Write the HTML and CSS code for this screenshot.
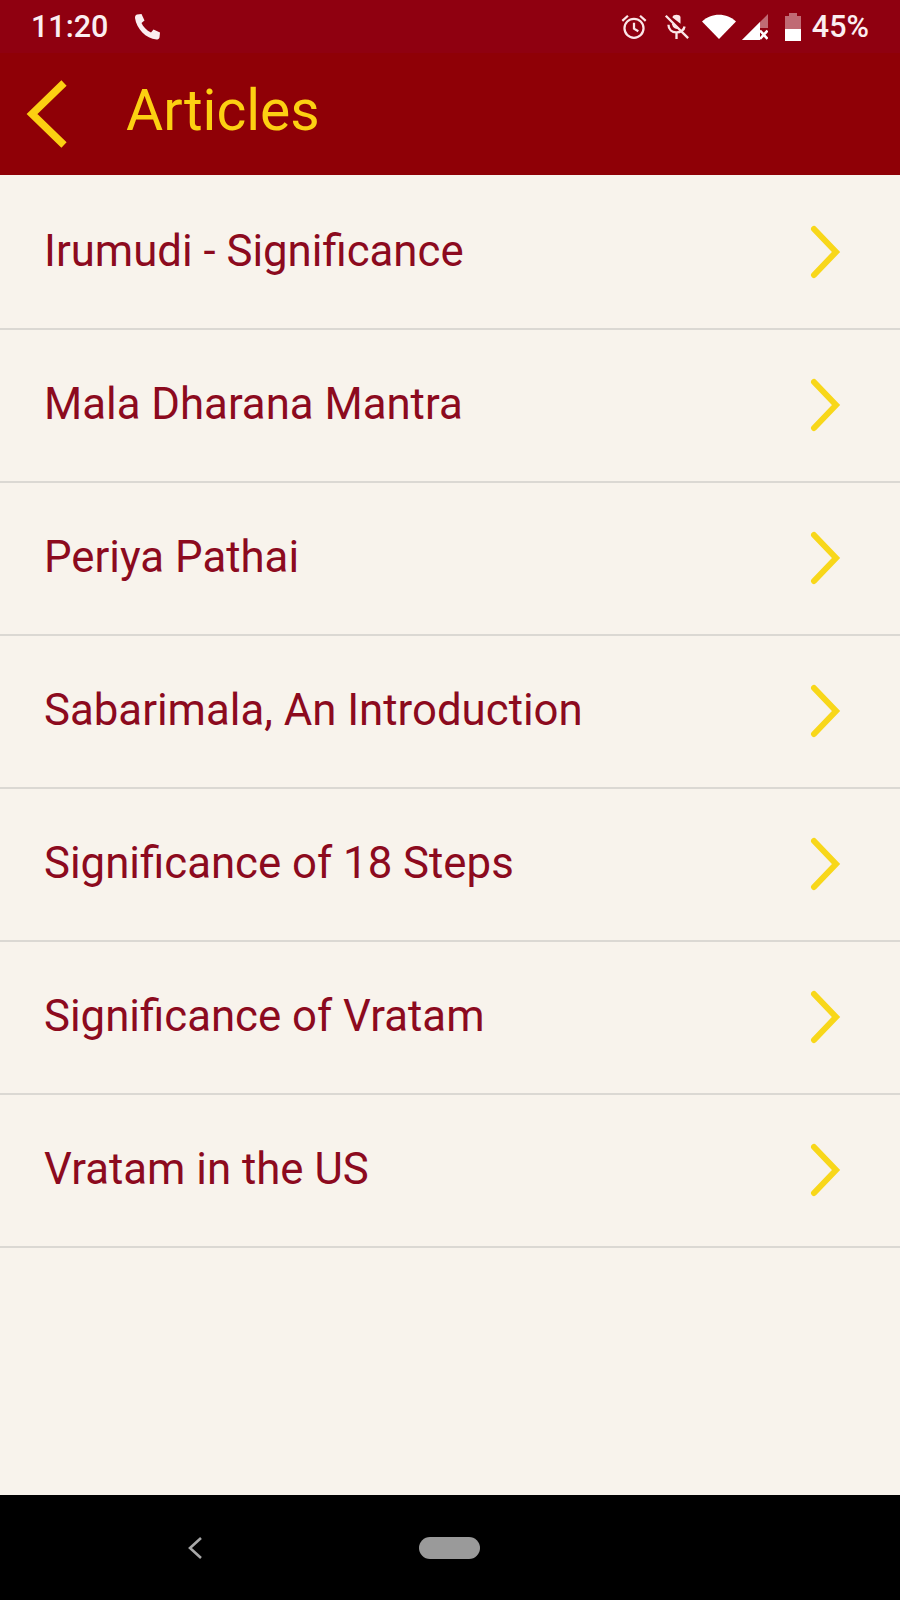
FILE: index.html
```html
<!DOCTYPE html>
<html>
<head>
<meta http-equiv="Content-Type" content="text/html; charset=utf-8"/>
<title>Articles</title>
<link rel="stylesheet" href="styles.css">
</head>
<body>
<div class="phone">
  <div class="status">
    <div class="status-left">
      <span class="time">11:20</span>
      <svg class="call" width="28" height="28" viewBox="0 0 28 28"><path d="M4 1.5 L8.5 1 L11.5 7.5 L8.5 10 C10 13.5 13.5 17.5 18 19.5 L20.5 16.5 L27 19.5 L26.5 24.5 C26 26 25 26.5 23.5 26.5 C13 25.5 3.5 16 2 5 C2 3 2.5 2 4 1.5 Z" fill="#fbeef0"/></svg>
    </div>
    <div class="status-right">
      <svg class="alarm" width="26" height="26" viewBox="0 0 30 30" fill="none" stroke="#fbe6e8" stroke-width="2.6"><circle cx="15" cy="16.5" r="11"/><path d="M15 10 V17 L20 20"/><path d="M1.5 8 L8 2 M28.5 8 L22 2"/></svg>
      <svg class="mic" width="25" height="27" viewBox="0 0 28 30" fill="none" stroke="#fbe6e8" stroke-width="2.6"><path d="M9.5 4.5 C10 1 18 1 18.5 4.5 V12 L9.5 5 Z" fill="#fbe6e8" stroke="none"/><path d="M5 13 C5 24 22 24 23 15 M14 22 V29"/><path d="M10 12 C11 16 14 17 16 16.5"/><path d="M2 3 L27 28"/></svg>
      <svg class="wifi" width="34" height="25" viewBox="0 0 34 25"><path d="M0 7.5 C9 -1.5 25 -1.5 34 7.5 L17 25 Z" fill="#ffffff"/></svg>
      <svg class="signal" width="26" height="26" viewBox="0 0 26 26"><path d="M0 26 L26 0 V14 H18 V26 Z" fill="#c06a74"/><path d="M0 26 L18 8 V26 Z" fill="#ffffff"/><path d="M18 16.5 L25.5 25 M25.5 16.5 L18 25" stroke="#ffffff" stroke-width="2.6"/></svg>
      <div class="battery"><div class="battery-cap"></div><div class="battery-body"><div class="battery-fill"></div></div></div>
      <span class="percent">45%</span>
    </div>
  </div>
  <div class="toolbar">
    <svg class="back" width="44" height="72" viewBox="0 0 44 72" fill="none" stroke="#fcd012" stroke-width="7.5"><path d="M38 5 L6 36 L38 67"/></svg>
    <span class="title">Articles</span>
  </div>
  <ul class="list">
    <li class="row"><span class="row-text">Irumudi - Significance</span><svg class="chev" width="34" height="54" viewBox="0 0 34 54" fill="none" stroke="#f8d71a" stroke-width="6" stroke-linecap="round"><path d="M6 4 L28 27 L6 50"/></svg></li>
    <li class="row"><span class="row-text">Mala Dharana Mantra</span><svg class="chev" width="34" height="54" viewBox="0 0 34 54" fill="none" stroke="#f8d71a" stroke-width="6" stroke-linecap="round"><path d="M6 4 L28 27 L6 50"/></svg></li>
    <li class="row"><span class="row-text">Periya Pathai</span><svg class="chev" width="34" height="54" viewBox="0 0 34 54" fill="none" stroke="#f8d71a" stroke-width="6" stroke-linecap="round"><path d="M6 4 L28 27 L6 50"/></svg></li>
    <li class="row"><span class="row-text">Sabarimala, An Introduction</span><svg class="chev" width="34" height="54" viewBox="0 0 34 54" fill="none" stroke="#f8d71a" stroke-width="6" stroke-linecap="round"><path d="M6 4 L28 27 L6 50"/></svg></li>
    <li class="row"><span class="row-text">Significance of 18 Steps</span><svg class="chev" width="34" height="54" viewBox="0 0 34 54" fill="none" stroke="#f8d71a" stroke-width="6" stroke-linecap="round"><path d="M6 4 L28 27 L6 50"/></svg></li>
    <li class="row"><span class="row-text">Significance of Vratam</span><svg class="chev" width="34" height="54" viewBox="0 0 34 54" fill="none" stroke="#f8d71a" stroke-width="6" stroke-linecap="round"><path d="M6 4 L28 27 L6 50"/></svg></li>
    <li class="row"><span class="row-text">Vratam in the US</span><svg class="chev" width="34" height="54" viewBox="0 0 34 54" fill="none" stroke="#f8d71a" stroke-width="6" stroke-linecap="round"><path d="M6 4 L28 27 L6 50"/></svg></li>
  </ul>
  <div class="navbar">
    <svg class="nav-back" width="16" height="24" viewBox="0 0 16 24" fill="none" stroke="#a8a8a8" stroke-width="2.6"><path d="M14 2 L3 12 L14 22"/></svg>
    <div class="nav-home"></div>
  </div>
</div>
</body>
</html>
```

FILE: styles.css
```css
html, body {
  margin: 0;
  padding: 0;
}

body {
  font-family: Roboto, sans-serif;
  background-color: #f8f3ec;
}

.phone {
  width: 900px;
  height: 1600px;
  display: flex;
  flex-direction: column;
}

.status {
  height: 53px;
  background-color: #8f0010;
  color: #fbeef0;
  display: flex;
  justify-content: space-between;
  align-items: center;
  padding: 0 31px 0 31px;
}

.status-left {
  display: flex;
  align-items: center;
  gap: 25px;
}

.time, .percent {
  font-size: 30.5px;
  font-weight: 500;
}

.status-right {
  display: flex;
  align-items: center;
}

.mic {
  margin-left: 17px;
}

.wifi {
  margin-left: 13px;
}

.signal {
  margin-left: 6px;
}

.battery {
  margin-left: 17px;
  display: flex;
  flex-direction: column;
  align-items: center;
  width: 16px;
}

.percent {
  margin-left: 11px;
}

.battery-cap {
  width: 8px;
  height: 3px;
  background-color: #c06a74;
}

.battery-body {
  width: 16px;
  height: 25px;
  background-color: #c06a74;
  display: flex;
  align-items: flex-end;
}

.battery-fill {
  width: 100%;
  height: 12px;
  background-color: #ffffff;
}

.toolbar {
  height: 122px;
  background-color: #8f0006;
  display: flex;
  align-items: center;
  padding-left: 26px;
}

.back {
  margin-right: 56px;
}

.title {
  font-size: 57px;
  color: #fcd012;
  margin-bottom: 8px;
}

.list {
  list-style: none;
  margin: 0;
  padding: 2px 0 0;
  flex: 1;
}

.row {
  height: 150px;
  border-bottom: 2px solid #dbd8d3;
  display: flex;
  justify-content: space-between;
  align-items: center;
  padding: 0 58px 1px 44px;
  font-size: 43.75px;
  color: #8c0a1e;
}

.row-text {
  margin-bottom: 2px;
}

.navbar {
  height: 105px;
  background-color: #000000;
  display: flex;
  align-items: center;
  padding-left: 187px;
  gap: 216px;
}

.nav-home {
  width: 61px;
  height: 22px;
  border-radius: 11px;
  background-color: #9a9a9a;
}
```
